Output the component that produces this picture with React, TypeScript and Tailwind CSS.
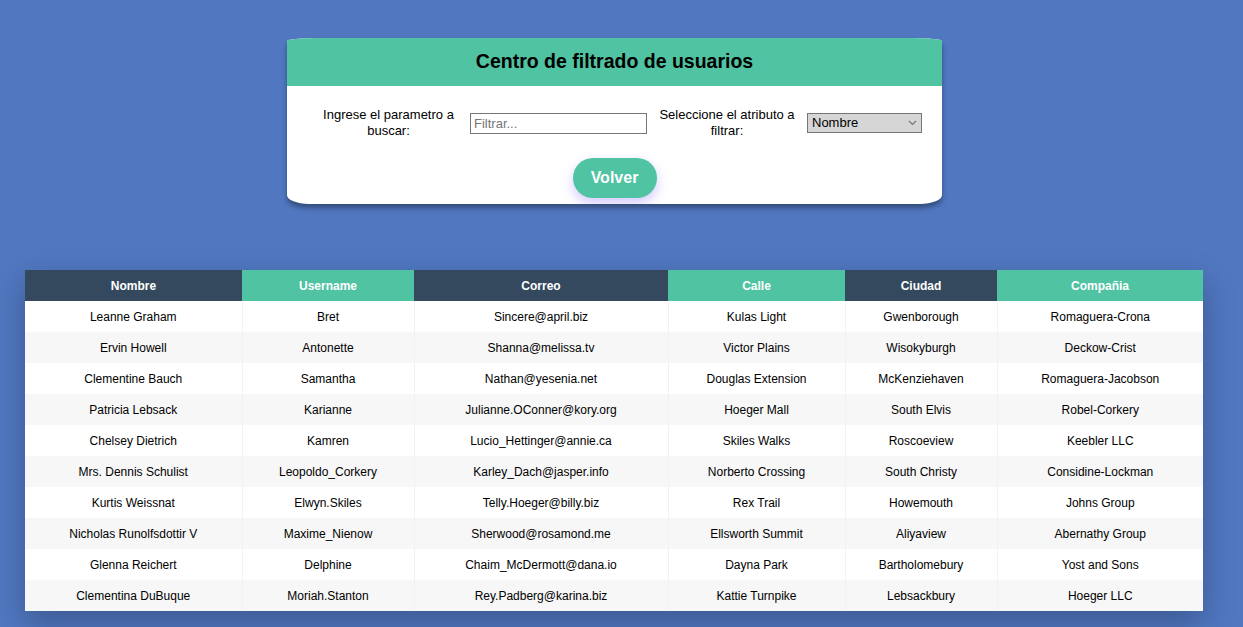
import React from 'react';

const users = [
  ['Leanne Graham', 'Bret', 'Sincere@april.biz', 'Kulas Light', 'Gwenborough', 'Romaguera-Crona'],
  ['Ervin Howell', 'Antonette', 'Shanna@melissa.tv', 'Victor Plains', 'Wisokyburgh', 'Deckow-Crist'],
  ['Clementine Bauch', 'Samantha', 'Nathan@yesenia.net', 'Douglas Extension', 'McKenziehaven', 'Romaguera-Jacobson'],
  ['Patricia Lebsack', 'Karianne', 'Julianne.OConner@kory.org', 'Hoeger Mall', 'South Elvis', 'Robel-Corkery'],
  ['Chelsey Dietrich', 'Kamren', 'Lucio_Hettinger@annie.ca', 'Skiles Walks', 'Roscoeview', 'Keebler LLC'],
  ['Mrs. Dennis Schulist', 'Leopoldo_Corkery', 'Karley_Dach@jasper.info', 'Norberto Crossing', 'South Christy', 'Considine-Lockman'],
  ['Kurtis Weissnat', 'Elwyn.Skiles', 'Telly.Hoeger@billy.biz', 'Rex Trail', 'Howemouth', 'Johns Group'],
  ['Nicholas Runolfsdottir V', 'Maxime_Nienow', 'Sherwood@rosamond.me', 'Ellsworth Summit', 'Aliyaview', 'Abernathy Group'],
  ['Glenna Reichert', 'Delphine', 'Chaim_McDermott@dana.io', 'Dayna Park', 'Bartholomebury', 'Yost and Sons'],
  ['Clementina DuBuque', 'Moriah.Stanton', 'Rey.Padberg@karina.biz', 'Kattie Turnpike', 'Lebsackbury', 'Hoeger LLC'],
];

const columns = [
  { label: 'Nombre', width: 'w-[217px]', dark: true },
  { label: 'Username', width: 'w-[172px]', dark: false },
  { label: 'Correo', width: 'w-[254px]', dark: true },
  { label: 'Calle', width: 'w-[177px]', dark: false },
  { label: 'Ciudad', width: 'w-[152px]', dark: true },
  { label: 'Compañia', width: 'w-[206px]', dark: false },
];

export default function App() {
  return (
    <div className="min-h-[627px] bg-[#5077c0] font-['Liberation_Sans',Arial,sans-serif] text-black">
      <div className="w-[1229px] px-[25px] pt-[38px] pb-[16px] flex flex-col items-center">
        <div className="w-[655px] bg-white rounded-[30px_30px_22px_22px/3px_3px_9px_9px] shadow-[0_4px_5px_rgba(0,0,0,0.35)] overflow-hidden">
          <div className="h-[48px] bg-[#50c3a2] flex items-center justify-center">
            <h1 className="text-[19.5px] font-bold">Centro de filtrado de usuarios</h1>
          </div>
          <div className="pt-[21px] pb-[6px] flex flex-col items-center">
            <div className="w-full pl-[30px] flex items-center gap-[10px] text-[13px] leading-[16px]">
              <label className="w-[143px] text-center">Ingrese el parametro a buscar:</label>
              <input
                placeholder="Filtrar..."
                className="w-[177px] h-[21px] border border-[#767676] px-[3px] text-[13px] outline-none placeholder:text-[#757575]"
              />
              <label className="w-[140px] text-center">Seleccione el atributo a filtrar:</label>
              <div className="relative w-[115px] h-[20px] bg-[#d6d6d6] border border-[#767676] flex items-center pl-[4px] text-[13px]">
                Nombre
                <svg className="absolute right-[4px] top-[6px]" width="9" height="6" viewBox="0 0 9 6" fill="none">
                  <path d="M1 1l3.5 3.5L8 1" stroke="#777" strokeWidth="1.2" />
                </svg>
              </div>
            </div>
            <button className="mt-[19px] w-[84px] h-[40px] rounded-full bg-[#50c3a2] text-white text-[16px] font-bold shadow-[0_5px_12px_rgba(130,100,255,0.35)]">
              Volver
            </button>
          </div>
        </div>

        <table className="self-start mt-[66px] w-[1178px] border-collapse table-fixed shadow-[0_12px_30px_rgba(0,0,0,0.25)] text-[12px]">
          <thead>
            <tr className="h-[31px]">
              {columns.map((c) => (
                <th
                  key={c.label}
                  className={`${c.width} font-bold text-white ${c.dark ? 'bg-[#34495e]' : 'bg-[#50c3a2]'}`}
                >
                  {c.label}
                </th>
              ))}
            </tr>
          </thead>
          <tbody>
            {users.map((row, i) => (
              <tr key={i} className={`h-[31px] ${i % 2 === 0 ? 'bg-white' : 'bg-[#f7f7f7]'}`}>
                {row.map((cell, j) => (
                  <td key={j} className="text-center border-r border-[#f2f2f2] last:border-r-0">
                    {cell}
                  </td>
                ))}
              </tr>
            ))}
          </tbody>
        </table>
      </div>
    </div>
  );
}
